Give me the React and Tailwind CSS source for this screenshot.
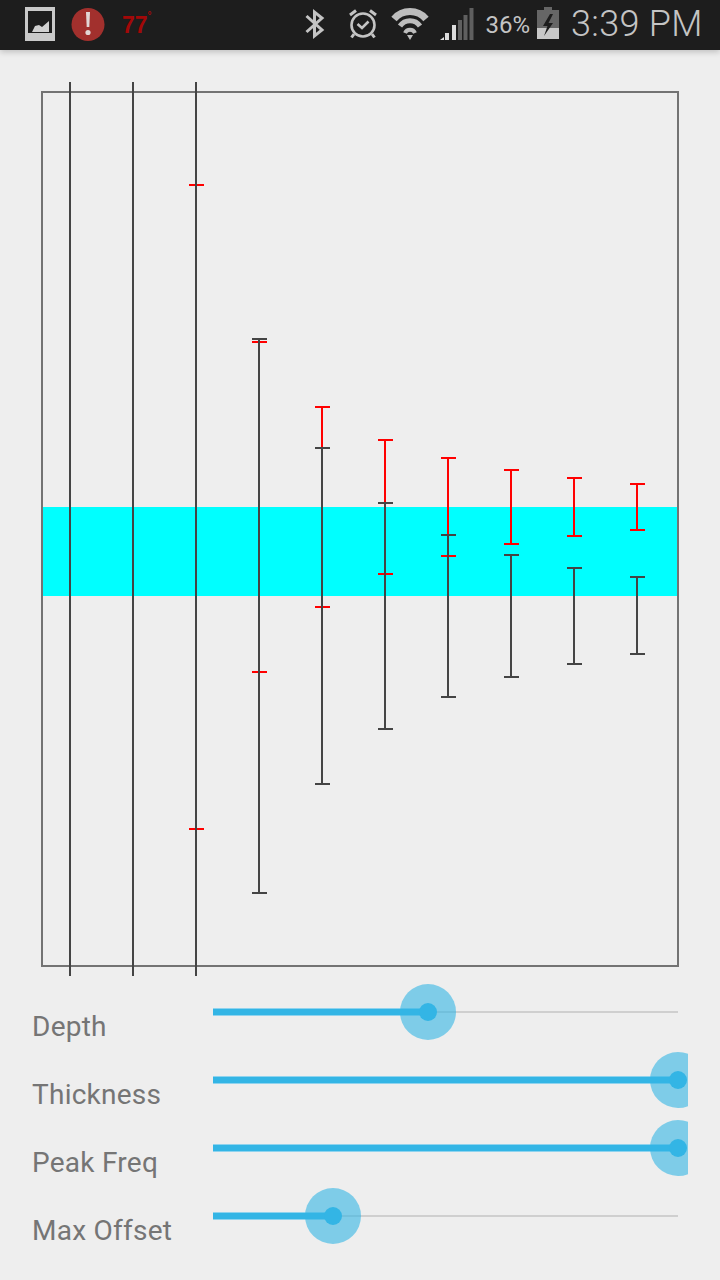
import React from 'react'

// [x centre, red top, red bottom, dark top, dark bottom]
const BARS = [
  [70, null, null, 82, 976],
  [133, null, null, 82, 976],
  [196, 185, 829, 82, 976],
  [259, 342, 672, 339, 893],
  [322, 407, 607, 448, 784],
  [385, 440, 574, 503, 729],
  [448, 458, 556, 535, 697],
  [511, 470, 544, 555, 677],
  [574, 478, 536, 568, 664],
  [637, 484, 530, 577, 654],
]

const SLIDERS = [
  { label: 'Depth', pos: 215 },
  { label: 'Thickness', pos: 465 },
  { label: 'Peak Freq', pos: 465 },
  { label: 'Max Offset', pos: 120 },
]

function StatusIcons() {
  return (
    <svg width="720" height="50" viewBox="0 0 720 50" className="absolute left-0 top-0">
      {/* picture */}
      <rect x="25" y="7" width="30" height="34" fill="#c9c9c9" />
      <rect x="28" y="11" width="24" height="22" fill="#1d1d1d" />
      <path d="M32 32 L35 26 L39 25 L42 27 L49 21 L49 32 Z" fill="#d0d0d0" />
      {/* alert */}
      <circle cx="88" cy="24.5" r="16.5" fill="#a2302d" />
      <path d="M86 12 H90 L89.3 27 H86.7 Z" fill="#e2d6d5" />
      <circle cx="88" cy="32.5" r="2.6" fill="#e2d6d5" />
      {/* bluetooth */}
      <path d="M306.5 16 L322 30 L314.5 36 L314.5 12 L322 18 L306.5 32" fill="none" stroke="#c4c4c4" strokeWidth="3" />
      {/* alarm */}
      <circle cx="363" cy="25" r="11.5" fill="none" stroke="#c4c4c4" strokeWidth="2.6" />
      <path d="M357.5 24 L362 28 L368.5 21.5" fill="none" stroke="#c4c4c4" strokeWidth="2.6" />
      <path d="M350 15 L356 10.5 M376 15 L370 10.5 M354 34 L351.5 37.5 M372 34 L374.5 37.5" fill="none" stroke="#c4c4c4" strokeWidth="3" />
      {/* wifi */}
      <path d="M394 19 A21 21 0 0 1 426 19" fill="none" stroke="#bdbdbd" strokeWidth="7" />
      <path d="M400 26 A12 12 0 0 1 420 26" fill="none" stroke="#bdbdbd" strokeWidth="5" />
      <path d="M405 33 A5.5 5.5 0 0 1 415 33" fill="none" stroke="#bdbdbd" strokeWidth="4" />
      <path d="M407 35 H413 L410 40 Z" fill="#bdbdbd" />
      {/* signal */}
      <path d="M440 40 L444 37 V40 Z" fill="#e0e0e0" />
      <rect x="445" y="33" width="4" height="7" fill="#dcdcdc" />
      <rect x="452" y="25" width="4" height="15" fill="#dcdcdc" />
      <rect x="458" y="20" width="4" height="20" fill="#5f5f5f" />
      <rect x="463.5" y="15" width="4" height="25" fill="#5f5f5f" />
      <rect x="469.5" y="8" width="4" height="32" fill="#5f5f5f" />
      {/* battery */}
      <rect x="544" y="7" width="8" height="3" fill="#666666" />
      <rect x="537" y="10" width="22" height="18" fill="#666666" />
      <rect x="537" y="28" width="22" height="11" fill="#c8c8c8" />
      <path d="M550 14 L543 26 L547.5 26 L544 36 L553 23 L548.5 23 L553 14 Z" fill="#1d1d1d" />
    </svg>
  )
}

function Chart() {
  return (
    <svg width="720" height="928" viewBox="0 50 720 928" className="block">
      <rect x="43" y="507" width="634" height="89" fill="#00ffff" />
      <rect x="42" y="92" width="636" height="874" fill="none" stroke="#737373" strokeWidth="2" />
      {BARS.map(([x, redTop, redBot, top, bot]) => (
        <g key={x}>
          {redTop !== null && (
            <g stroke="#ff0000" strokeWidth="2">
              <path d={`M${x} ${redTop} V${redBot}`} />
              <path d={`M${x - 7} ${redTop} H${x + 8} M${x - 7} ${redBot} H${x + 8}`} />
            </g>
          )}
          <g stroke="#444444" strokeWidth="2">
            <path d={`M${x} ${top} V${bot}`} />
            {top > 82 && <path d={`M${x - 7} ${top} H${x + 8} M${x - 7} ${bot} H${x + 8}`} />}
          </g>
        </g>
      ))}
    </svg>
  )
}

function Slider({ pos }) {
  return (
    <div className="relative h-[68px] w-[475px] overflow-hidden">
      <div className="flex h-full w-[465px] items-center">
        <div className="h-[8px] border-y border-[#8fd3ee] bg-[#33b5e5]" style={{ width: pos }} />
        <div className="h-[2px] flex-1 bg-[#cfcfcf]" />
      </div>
      <div
        className="absolute top-[6px] flex h-[56px] w-[56px] -translate-x-1/2 items-center justify-center rounded-full bg-[#33b5e5]/60"
        style={{ left: pos }}
      >
        <div className="h-[18px] w-[18px] rounded-full bg-[#33b5e5]" />
      </div>
    </div>
  )
}

export default function App() {
  return (
    <div className="h-[1280px] w-[720px] overflow-hidden bg-[#eeeeee] font-['Roboto',sans-serif]">
      <div className="relative z-10 flex h-[50px] items-center bg-[#1d1d1d] shadow-[0_2px_6px_rgba(0,0,0,0.2)]">
        <StatusIcons />
        <span className="absolute left-[122px] top-[12px] font-['Liberation_Sans',sans-serif] text-[23px] leading-[26px] font-bold text-[#a30808]">
          77<sup className="align-super text-[10px]">°</sup>
        </span>
        <div className="ml-auto flex items-center text-[#c4c4c4]">
          <span className="mr-[190px] text-[24px] leading-[50px]">36%</span>
        </div>
        <span className="absolute left-[571px] top-0 text-[36px] leading-[48px] font-light tracking-[0.3px] text-[#c4c4c4]">3:39 PM</span>
      </div>
      <Chart />
      <div className="flex flex-col">
        {SLIDERS.map((s) => (
          <div key={s.label} className="flex h-[68px]">
            <div className="w-[213px] pl-[32px] pt-[31px] text-[28px] leading-[36px] tracking-[0.25px] text-[#757575]">{s.label}</div>
            <Slider pos={s.pos} />
          </div>
        ))}
      </div>
    </div>
  )
}
